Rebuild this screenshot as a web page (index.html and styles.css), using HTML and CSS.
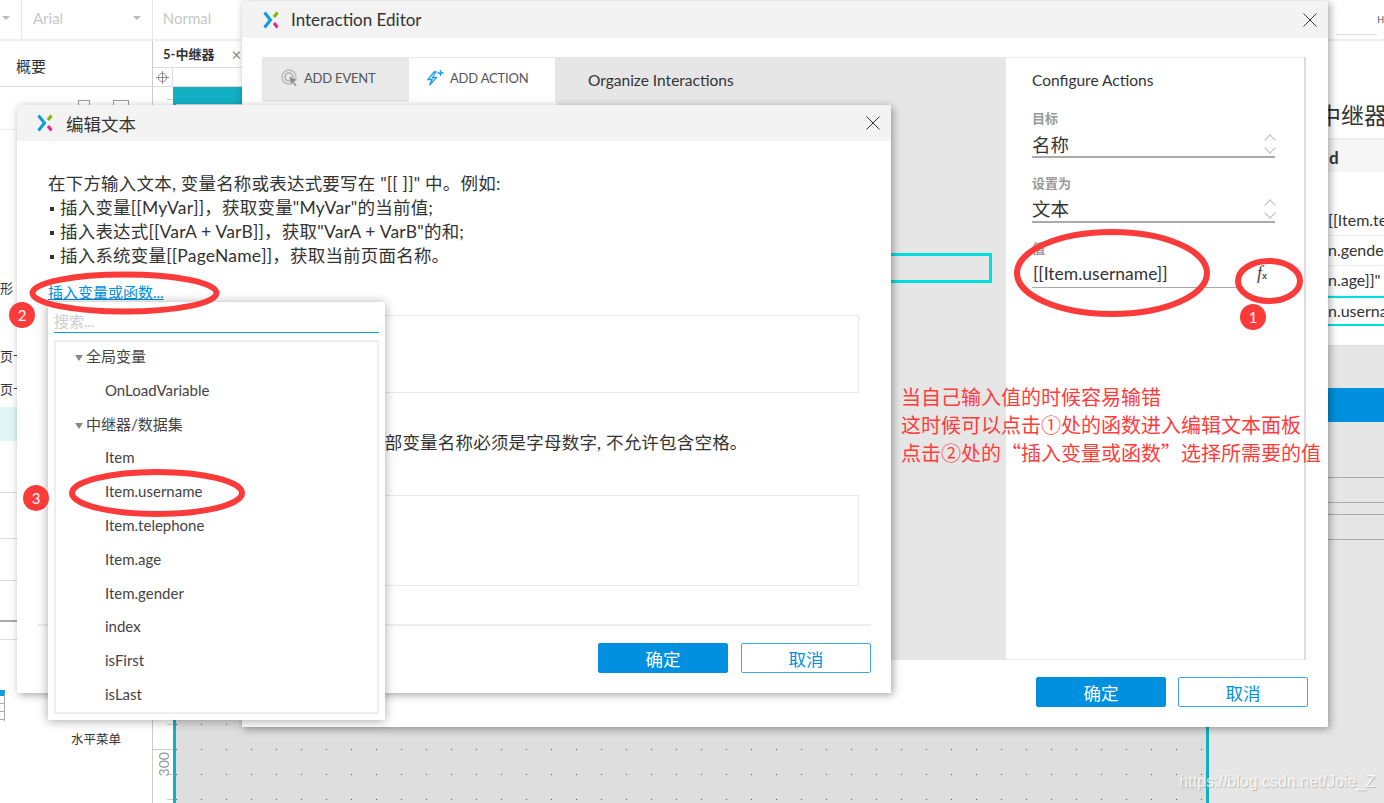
FILE: index.html
```html
<!DOCTYPE html>
<html lang="zh-CN">
<head>
    <meta charset="UTF-8">
    <title>Interaction Editor</title>
    <link rel="stylesheet" href="styles.css">
</head>
<body>

<div class="desktop">

    <!-- app behind the dialogs -->
    <div class="toolbar">
        <div class="tool tool-first"><span class="caret"></span></div>
        <div class="tool tool-font">Arial<span class="caret"></span></div>
        <div class="tool tool-style">Normal</div>
        <div class="tool-right"><span class="tool-input"></span><span>H</span></div>
    </div>
    <div class="workspace">
        <div class="left-panel">
            <div class="outline">概要</div>
            <div class="outline-icons"><span class="mini-page"></span><span class="mini-folder"></span></div>
            <div class="lib-row lib-shape">形</div>
            <div class="lib-row lib-tab">页卡</div>
            <div class="lib-row lib-tab2">页卡</div>
            <div class="lib-row lib-selected"></div>
            <div class="lib-line lib-line-a"></div>
            <div class="lib-line lib-line-e"></div>
            <div class="lib-line lib-line-b"></div>
            <div class="lib-line lib-line-c"></div>
            <div class="lib-line lib-line-d"></div>
            <div class="lib-table"><i></i><i></i><i></i></div>
            <div class="lib-menu">水平菜单</div>
        </div>
        <div class="canvas-col">
            <div class="tab-row"><span class="tab-name">5-中继器</span><span class="tab-close">×</span></div>
            <div class="ruler-top">
                <span class="ruler-corner">
                    <svg viewBox="0 0 14 14"><circle cx="7" cy="7" r="4.500" fill="none" stroke="#888"/><path d="M7 0v14M0 7h14" stroke="#888"/></svg>
                </span>
            </div>
            <div class="canvas-row">
                <div class="ruler-left"><span class="ruler-num">300</span></div>
                <div class="canvas">
                    <div class="canvas-head"></div>
                </div>
                <div class="canvas-rest"></div>
            </div>
        </div>
        <div class="right-panel">
            <div class="right-title">中继器</div>
            <div class="right-head">d</div>
            <div class="right-code">
                <div class="code-row">[[Item.telephone]]</div>
                <div class="code-row">n.gender]]</div>
                <div class="code-row">n.age]]"</div>
                <div class="code-row code-on">n.username</div>
            </div>
            <div class="right-gray">
                <div class="right-blue"></div>
                <div class="right-lines"><i></i><i></i><i></i><i></i></div>
            </div>
        </div>
    </div>

    <!-- Interaction Editor window -->
    <div class="window editor">
        <div class="win-title">
            <svg class="logo" viewBox="0 0 16 18"><path d="M1.500 1.500L7.500 9l-6 7.500" fill="none" stroke="#0e9ddb" stroke-width="3"/><path d="M14.500 1.500l-3.500 4.500" fill="none" stroke="#7ab800" stroke-width="3"/><path d="M11 12l3.500 4.500" fill="none" stroke="#e6267f" stroke-width="3"/></svg>
            <span class="win-name">Interaction Editor</span>
            <svg class="win-close" viewBox="0 0 14 14"><path d="M.5.5l13 13M13.500.5l-13 13" stroke="#333" fill="none"/></svg>
        </div>
        <div class="editor-body">
            <div class="editor-left">
                <div class="tabs">
                    <div class="ed-tab ed-tab-event">
                        <svg class="ed-icon" viewBox="0 0 18 18"><circle cx="8" cy="8" r="7" fill="none" stroke="#bbb" stroke-width="1.500"/><circle cx="8" cy="8" r="4" fill="none" stroke="#aaa" stroke-width="1.500"/><path d="M8 7l9 4-4 1.500 3 4-1.500 1-3-3.800L10 17z" fill="#8a8a8a" stroke="#eee" stroke-width=".6"/></svg>
                        ADD EVENT
                    </div>
                    <div class="ed-tab ed-tab-action">
                        <svg class="ed-icon" viewBox="0 0 18 18"><path d="M8 3L2 10.500h4L3.500 16l7-7.500H6.500L10 3z" fill="none" stroke="#1a9ce0" stroke-width="1.300"/><path d="M14.500 1v6M11.500 4h6" stroke="#1a9ce0" stroke-width="1.300"/></svg>
                        ADD ACTION
                    </div>
                </div>
            </div>
            <div class="organize">
                <div class="organize-title">Organize Interactions</div>
                <div class="organize-box"></div>
            </div>
            <div class="configure">
                <div class="config-title">Configure Actions</div>
                <div class="field">
                    <div class="field-label">目标</div>
                    <div class="field-value">名称<span class="updown"></span></div>
                </div>
                <div class="field">
                    <div class="field-label">设置为</div>
                    <div class="field-value">文本<span class="updown"></span></div>
                </div>
                <div class="field">
                    <div class="field-label">值</div>
                    <div class="val-row">
                        <div class="field-value val-input">[[Item.username]]</div>
                        <span class="fx"><i>f</i><b>x</b></span>
                    </div>
                </div>
                <div class="note">
                    当自己输入值的时候容易输错<br>
                    这时候可以点击①处的函数进入编辑文本面板<br>
                    点击②处的“插入变量或函数”选择所需要的值
                </div>
            </div>
        </div>
        <div class="win-foot editor-foot">
            <button class="btn btn-ok">确定</button>
            <button class="btn btn-cancel">取消</button>
        </div>
    </div>

    <!-- edit text dialog -->
    <div class="window modal">
        <div class="win-title modal-title">
            <svg class="logo" viewBox="0 0 16 18"><path d="M1.500 1.500L7.500 9l-6 7.500" fill="none" stroke="#0e9ddb" stroke-width="3"/><path d="M14.500 1.500l-3.500 4.500" fill="none" stroke="#7ab800" stroke-width="3"/><path d="M11 12l3.500 4.500" fill="none" stroke="#e6267f" stroke-width="3"/></svg>
            <span class="win-name">编辑文本</span>
            <svg class="win-close" viewBox="0 0 14 14"><path d="M.5.5l13 13M13.500.5l-13 13" stroke="#333" fill="none"/></svg>
        </div>
        <div class="modal-body">
            <p class="help">在下方输入文本, 变量名称或表达式要写在 "[[ ]]" 中。例如:</p>
            <p class="help"><span class="dot"></span>插入变量[[MyVar]]，获取变量"MyVar"的当前值;</p>
            <p class="help"><span class="dot"></span>插入表达式[[VarA + VarB]]，获取"VarA + VarB"的和;</p>
            <p class="help"><span class="dot"></span>插入系统变量[[PageName]]，获取当前页面名称。</p>
            <a class="insert-link">插入变量或函数...</a>
            <div class="text-box box-one"></div>
            <p class="help local-note">局部变量名称必须是字母数字, 不允许包含空格。</p>
            <div class="text-box box-two"></div>
        </div>
        <div class="win-foot modal-foot">
            <button class="btn btn-ok">确定</button>
            <button class="btn btn-cancel">取消</button>
        </div>
    </div>

    <!-- variable picker -->
    <div class="picker">
        <div class="picker-search">搜索...</div>
        <div class="picker-list">
            <div class="pick-group">全局变量</div>
            <div class="pick-item">OnLoadVariable</div>
            <div class="pick-group">中继器/数据集</div>
            <div class="pick-item">Item</div>
            <div class="pick-item">Item.username</div>
            <div class="pick-item">Item.telephone</div>
            <div class="pick-item">Item.age</div>
            <div class="pick-item">Item.gender</div>
            <div class="pick-item">index</div>
            <div class="pick-item">isFirst</div>
            <div class="pick-item">isLast</div>
        </div>
    </div>

    <!-- red annotations drawn on top -->
    <svg class="marks" viewBox="0 0 1384 803">
        <ellipse cx="124.500" cy="293" rx="92" ry="18.500"/>
        <ellipse cx="157" cy="493" rx="85" ry="21"/>
        <ellipse cx="1112" cy="273" rx="95" ry="41"/>
        <ellipse cx="1269" cy="281" rx="31" ry="20"/>
    </svg>
    <span class="badge badge-1">1</span>
    <span class="badge badge-2">2</span>
    <span class="badge badge-3">3</span>

    <div class="watermark">https://blog.csdn.net/Joie_Z</div>
</div>

</body>
</html>
```

FILE: styles.css
```css
* {
    box-sizing: border-box;
}

html, body {
    margin: 0;
    padding: 0;
}

body {
    font-family: "Lato", "Noto Sans CJK SC", sans-serif;
    color: #333;
}

.desktop {
    position: relative;
    width: 1384px;
    height: 803px;
    overflow: hidden;
    background-color: #fff;
}

/* app behind the dialogs */
.toolbar {
    display: flex;
    height: 41px;
    border-bottom: 2px solid #eee;
    font-size: 15px;
    color: #c6c6c6;
}

.tool {
    display: flex;
    align-items: center;
    border-right: 1px solid #e6e6e6;
    height: 39px;
    padding-bottom: 3px;
}

.tool-first {
    width: 22px;
    padding-left: 2px;
}

.tool-font {
    width: 131px;
    padding-left: 11px;
    justify-content: space-between;
    padding-right: 11px;
}

.tool-style {
    width: 1170px;
    padding-left: 10px;
    border-right: 0;
}

.tool-right {
    display: flex;
    flex: 1;
    align-items: center;
    font-size: 9px;
    color: #555;
    white-space: nowrap;
    margin-left: 15px;
}

.tool-input {
    width: 41px;
    height: 30px;
    flex: none;
    border-bottom: 1px solid #ddd;
}

.caret {
    width: 0;
    height: 0;
    border: 4px solid transparent;
    border-top-color: #bbb;
    border-bottom: 0;
}

.workspace {
    display: flex;
    height: 762px;
}

.left-panel {
    position: relative;
    width: 153px;
    flex: none;
    border-right: 1px solid #ccc;
    font-size: 13px;
}

.outline {
    height: 46px;
    padding: 14px 0 0 16px;
    font-size: 15px;
    line-height: 22px;
    border-bottom: 1px solid #ddd;
}

.outline-icons {
    display: flex;
    gap: 23px;
    height: 43px;
    padding: 13px 0 0 78px;
    border-bottom: 1px solid #eee;
}

.mini-page,
.mini-folder {
    width: 12px;
    height: 12px;
    border: 1px solid #999;
}

.mini-folder {
    width: 16px;
}

.lib-row,
.lib-line,
.lib-table,
.lib-menu {
    position: absolute;
}

.lib-row {
    left: 0;
    white-space: nowrap;
}

.lib-shape { top: 237px; }
.lib-tab { top: 305px; }
.lib-tab2 { top: 338px; }

.lib-selected {
    left: 0;
    top: 366px;
    width: 17px;
    height: 34px;
    background-color: #e0f6f6;
}

.lib-line {
    left: 0;
    width: 17px;
    height: 1px;
    background-color: #ddd;
}

.lib-line-a { top: 451px; }
.lib-line-e { top: 497px; }
.lib-line-b { top: 539px; }
.lib-line-c { top: 579px; height: 2px; background-color: #aaa; }
.lib-line-d { top: 598px; }

.lib-table {
    left: 0;
    top: 649px;
    width: 5px;
    height: 31px;
    border-top: 6px solid #0a9de0;
    border-right: 1px solid #aaa;
}

.lib-table i {
    display: block;
    height: 8px;
    border-bottom: 1px solid #aaa;
}

.lib-menu {
    left: 71px;
    top: 688px;
    font-size: 12.500px;
}

.canvas-col {
    display: flex;
    flex-direction: column;
    width: 1175px;
    flex: none;
}

.tab-row {
    display: flex;
    align-items: center;
    height: 26px;
    padding-left: 10px;
    gap: 17px;
}

.tab-name {
    font-size: 13px;
    font-weight: 700;
    margin-top: -2px;
}

.tab-close {
    font-size: 17px;
    color: #888;
}

.ruler-top {
    height: 20px;
    border-top: 1px solid #ddd;
    border-bottom: 1px solid #ddd;
}

.ruler-corner {
    display: flex;
    align-items: center;
    justify-content: center;
    width: 20px;
    height: 18px;
    border-right: 1px solid #ddd;
}

.ruler-corner svg {
    width: 13px;
    height: 13px;
}

.canvas-row {
    display: flex;
    flex: 1;
}

.ruler-left {
    display: flex;
    align-items: flex-end;
    width: 20px;
    padding: 0 0 27px 2px;
    flex: none;
    background-image: linear-gradient(#ccc, #ccc), linear-gradient(#ccc 1px, transparent 1px);
    background-size: 100% 1px, 6px 25px;
    background-position: 0 662px, right 12px;
    background-repeat: no-repeat, repeat-y;
}

.ruler-num {
    font-size: 14px;
    color: #999;
    writing-mode: vertical-rl;
    transform: rotate(180deg);
}

.canvas {
    width: 1036px;
    flex: none;
    background-color: #dddddd;
    background-image: radial-gradient(circle, #555 0, #555 .6px, transparent 1px);
    background-size: 25px 25px;
    background-position: 13px 0;
    border-left: 3px solid #12b0c4;
    border-right: 3px solid #12b0c4;
}

.canvas-head {
    height: 17px;
    background-color: #12afc3;
}

.canvas-rest {
    flex: 1;
    background-color: #e6e6e6;
}

.right-panel {
    position: relative;
    display: flex;
    flex-direction: column;
    width: 56px;
    flex: none;
    background-color: #fff;
    overflow: hidden;
    white-space: nowrap;
}

.right-title {
    margin-top: 56px;
    height: 41px;
    margin-left: -10px;
    font-size: 23px;
}

.right-head {
    height: 34px;
    padding: 7px 0 0 1px;
    background-color: #f6f6f6;
    border-top: 2px solid #eee;
    font-size: 17px;
    font-weight: 700;
}

.right-code {
    padding-top: 34px;
    font-size: 16px;
}

.code-row {
    height: 30px;
    line-height: 28px;
    border-bottom: 1px solid #eee;
}

.code-on {
    border-top: 2px solid #00dfe0;
    border-bottom: 2px solid #00dfe0;
    line-height: 26px;
}

.right-gray {
    flex: 1;
    margin-top: 19px;
    padding-top: 42px;
    border-top: 1px solid #ddd;
    background-color: #e6e6e6;
}

.right-blue {
    height: 34px;
    background-color: #0090e0;
}

.right-lines {
    padding-top: 55px;
}

.right-lines i {
    display: block;
    height: 1px;
    background-color: #aaa;
}

.right-lines i:nth-child(2) { margin-top: 24px; }
.right-lines i:nth-child(3) { margin-top: 11px; }
.right-lines i:nth-child(4) { margin-top: 24px; }

/* dialog windows */
.window {
    position: absolute;
    display: flex;
    flex-direction: column;
    background-color: #fff;
    box-shadow: 2px 2px 8px rgba(0, 0, 0, 0.35);
}

.editor {
    left: 242px;
    top: 1px;
    width: 1086px;
    height: 726px;
}

.win-title {
    display: flex;
    align-items: center;
    height: 37px;
    padding-left: 21px;
    flex: none;
    background-color: #f3f3f3;
}

.logo {
    width: 16px;
    height: 18px;
    flex: none;
}

.win-name {
    margin-left: 12px;
    font-size: 17px;
    flex: 1;
}

.modal .win-name {
    margin-left: 13px;
    font-size: 17.500px;
}

.win-close {
    width: 14px;
    height: 14px;
    margin-right: 11px;
}

.editor-body {
    display: flex;
    height: 603px;
    margin: 19px 0 0 20px;
}

.editor-left {
    width: 294px;
    flex: none;
}

.tabs {
    display: flex;
    height: 44px;
    border-top: 1px solid #e6e6e6;
    border-left: 1px solid #e6e6e6;
    border-right: 1px solid #e6e6e6;
    font-size: 13px;
    letter-spacing: -.2px;
    color: #555;
}

.ed-tab {
    display: flex;
    align-items: center;
    width: 147px;
    height: 44px;
    padding: 0 0 4px 18px;
    gap: 5px;
}

.ed-tab-event {
    background-color: #e9e9e9;
}

.ed-tab-action {
    padding-left: 17px;
    gap: 6px;
}

.ed-icon {
    width: 18px;
    height: 18px;
    flex: none;
}

.organize {
    position: relative;
    width: 450px;
    flex: none;
    padding: 13px 0 0 32px;
    background-color: #e6e6e6;
    font-size: 15.500px;
}

.organize-title {
    line-height: 20px;
}

.organize-box {
    position: absolute;
    left: 300px;
    top: 196px;
    width: 136px;
    height: 30px;
    border: 3px solid #00dfe0;
}

.configure {
    position: relative;
    width: 300px;
    flex: none;
    padding: 12px 0 0 26px;
    border-right: 2px solid #ddd;
    border-bottom: 1px solid #e6e6e6;
    border-top: 1px solid #eee;
    font-size: 15.500px;
}

.config-title {
    line-height: 20px;
    margin-bottom: 20px;
}

.field {
    margin-bottom: 17px;
    width: 243px;
}

.field-label {
    font-size: 13px;
    line-height: 16px;
    color: #999;
    font-weight: 700;
}

.field-value {
    position: relative;
    display: flex;
    align-items: center;
    height: 32px;
    padding-top: 6px;
    font-size: 18.500px;
    color: #333;
    border-bottom: 2px solid #aaa;
}

.field + .field .field-value {
    padding-top: 3px;
}

.updown {
    position: absolute;
    right: 0;
    top: 0;
    width: 10px;
    height: 32px;
}

.updown::before,
.updown::after {
    content: "";
    position: absolute;
    left: 1px;
    width: 7px;
    height: 7px;
    border-top: 1px solid #bbb;
    border-left: 1px solid #bbb;
    transform: rotate(45deg);
}

.updown::before { top: 10px; }

.updown::after {
    top: 18px;
    transform: rotate(225deg);
}

.val-row {
    display: flex;
    width: 250px;
    align-items: center;
}

.val-input {
    width: 212px;
    flex: none;
    font-size: 17.500px;
    padding-left: 1px;
    border-bottom-width: 1px;
}

.fx {
    font-family: "Liberation Serif", serif;
    font-size: 18px;
    line-height: 20px;
    color: #444;
    margin: 5px 0 0 13px;
}

.fx b {
    font-family: "Liberation Sans", sans-serif;
    font-size: 9px;
    font-weight: 700;
    color: #555;
}

.note {
    position: absolute;
    left: -105px;
    top: 325px;
    width: 440px;
    font-size: 20px;
    line-height: 28px;
    color: #ff3c3c;
    white-space: nowrap;
    font-family: "Noto Sans CJK SC", sans-serif;
}

.win-foot {
    display: flex;
    justify-content: flex-end;
    gap: 12px;
}

.editor-foot {
    padding: 17px 20px 0 0;
}

.btn {
    width: 130px;
    height: 30px;
    padding: 0;
    border: 1px solid #0090e0;
    border-radius: 2px;
    font-family: "Noto Sans CJK SC", sans-serif;
    font-size: 17.500px;
    cursor: pointer;
}

.btn-ok {
    background-color: #0090e0;
    color: #fff;
}

.btn-cancel {
    background-color: #fff;
    color: #0090e0;
    border-color: #3ba9e8;
}

/* edit text dialog */
.modal {
    left: 17px;
    top: 105px;
    width: 874px;
    height: 588px;
}

.modal-title {
    height: 36px;
    padding-left: 20px;
}

.modal-body {
    flex: 1;
    padding: 31px 32px 0 31px;
}

.help {
    margin: 0;
    font-size: 17.500px;
    line-height: 24px;
    letter-spacing: .2px;
}

.dot {
    display: inline-block;
    width: 4px;
    height: 4px;
    margin: 0 6px 3px 2px;
    background-color: #333;
}

.insert-link {
    display: block;
    margin-top: 14px;
    font-size: 15px;
    line-height: 20px;
    color: #0090e0;
    text-decoration: underline;
}

.text-box {
    border: 1px solid #e8e8e8;
}

.box-one {
    height: 78px;
    margin-top: 13px;
}

.local-note {
    margin-top: 38px;
    padding-left: 319px;
    white-space: nowrap;
}

.box-two {
    height: 91px;
    margin-top: 40px;
}

.modal-foot {
    height: 69px;
    margin: 0 20px;
    padding-top: 17px;
    gap: 13px;
    border-top: 2px solid #eee;
}

/* variable picker */
.picker {
    position: absolute;
    left: 48px;
    top: 302px;
    width: 337px;
    height: 418px;
    padding: 9px 6px 6px;
    background-color: #fff;
    box-shadow: 0 1px 10px rgba(0, 0, 0, 0.35);
}

.picker-search {
    height: 22px;
    font-size: 15px;
    line-height: 20px;
    color: #ccc;
    border-bottom: 1px solid #0a9de0;
}

.picker-list {
    height: 374px;
    margin-top: 7px;
    border: 2px solid #eee;
    font-size: 15px;
    color: #444;
}

.pick-group,
.pick-item {
    height: 33.800px;
    line-height: 28px;
}

.pick-group {
    position: relative;
    padding-left: 30px;
}

.pick-group::before {
    content: "";
    position: absolute;
    left: 19px;
    top: 13px;
    border: 4px solid transparent;
    border-top: 6px solid #888;
    border-bottom: 0;
}

.pick-item {
    padding-left: 49px;
}

/* red annotations */
.marks {
    position: absolute;
    left: 0;
    top: 0;
    width: 1384px;
    height: 803px;
    pointer-events: none;
}

.marks ellipse {
    fill: none;
    stroke: #fb3a3a;
    stroke-width: 6px;
}

.badge {
    position: absolute;
    width: 26px;
    height: 26px;
    border-radius: 50%;
    background-color: #fb3a3a;
    color: #fff;
    font-size: 15px;
    line-height: 26px;
    text-align: center;
}

.badge-1 { left: 1240px; top: 304px; }
.badge-2 { left: 9px; top: 302px; }
.badge-3 { left: 23px; top: 485px; }

.watermark {
    position: absolute;
    right: 9px;
    top: 773px;
    font-family: "Liberation Sans", sans-serif;
    font-size: 16px;
    color: rgba(255, 255, 255, 0.8);
    text-shadow: 1px 1px 1px rgba(130, 130, 130, 0.45);
}
```
